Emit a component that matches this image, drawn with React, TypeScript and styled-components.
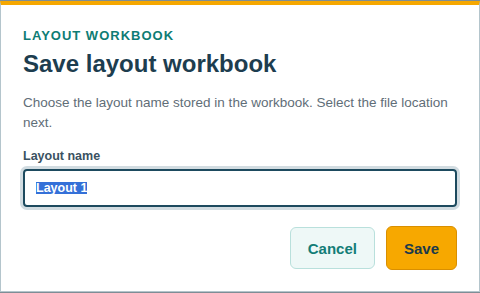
import React from 'react';
import styled, { createGlobalStyle } from 'styled-components';

const GlobalStyle = createGlobalStyle`
  html, body {
    margin: 0;
    padding: 0;
    background: #7e8d95;
  }
  body {
    font-family: "Liberation Sans", Arial, sans-serif;
    overflow: hidden;
  }
`;

const App = () => {
  return (
    <>
      <GlobalStyle />
      <Dialog role="dialog" aria-labelledby="save-title">
        <Eyebrow>Layout workbook</Eyebrow>
        <Title id="save-title">Save layout workbook</Title>
        <Description>
          Choose the layout name stored in the workbook. Select the file location next.
        </Description>
        <Label htmlFor="layout-name">Layout name</Label>
        <Field id="layout-name">
          <Selected>Layout 1</Selected>
        </Field>
        <Actions>
          <Button variant="secondary">Cancel</Button>
          <Button variant="primary">Save</Button>
        </Actions>
      </Dialog>
    </>
  );
};

export default App;

const Dialog = styled.div`
  box-sizing: border-box;
  margin-top: 1px;
  width: 480px;
  height: 291px;
  background: #fff;
  border: 1px solid #b4c5cc;
  border-top: 4px solid #f5a700;
  padding: 23px 22px 0 22px;
  display: flex;
  flex-direction: column;
`;

const Eyebrow = styled.div`
  font-size: 13px;
  line-height: 16px;
  font-weight: 700;
  letter-spacing: 1px;
  text-transform: uppercase;
  color: #0e7c74;
`;

const Title = styled.h2`
  margin: 5px 0 0;
  font-size: 24px;
  line-height: 30px;
  font-weight: 700;
  color: #1d3d4f;
`;

const Description = styled.p`
  margin: 14px 0 0;
  font-size: 13.5px;
  line-height: 20px;
  color: #5f6e78;
`;

const Label = styled.label`
  margin-top: 15px;
  font-size: 12.5px;
  line-height: 16px;
  font-weight: 700;
  color: #3a5262;
`;

const Field = styled.div`
  box-sizing: border-box;
  margin-top: 5px;
  height: 38px;
  border: 2px solid #1d4a5e;
  border-radius: 4px;
  box-shadow: 0 0 0 3px #d2dce1;
  padding: 0 11px;
  display: flex;
  align-items: center;
`;

const Selected = styled.span`
  display: inline-block;
  height: 12px;
  line-height: 12px;
  font-size: 12.5px;
  font-weight: 700;
  color: #fff;
  background: #3470d8;
`;

const Actions = styled.div`
  margin-top: 19px;
  display: flex;
  justify-content: flex-end;
  align-items: center;
  gap: 11px;
`;

const Button = styled.button<{ variant: 'primary' | 'secondary' }>`
  box-sizing: border-box;
  height: ${(p) => (p.variant === 'primary' ? '44px' : '42px')};
  padding: 0 17px;
  border-radius: 6px;
  font-family: "Liberation Sans", Arial, sans-serif;
  font-size: 15px;
  font-weight: 700;
  cursor: pointer;
  border: 1px solid ${(p) => (p.variant === 'primary' ? '#d98f00' : '#b9e0dc')};
  background: ${(p) => (p.variant === 'primary' ? '#f7a800' : '#eef8f7')};
  color: ${(p) => (p.variant === 'primary' ? '#1b3a4b' : '#137d77')};
`;
